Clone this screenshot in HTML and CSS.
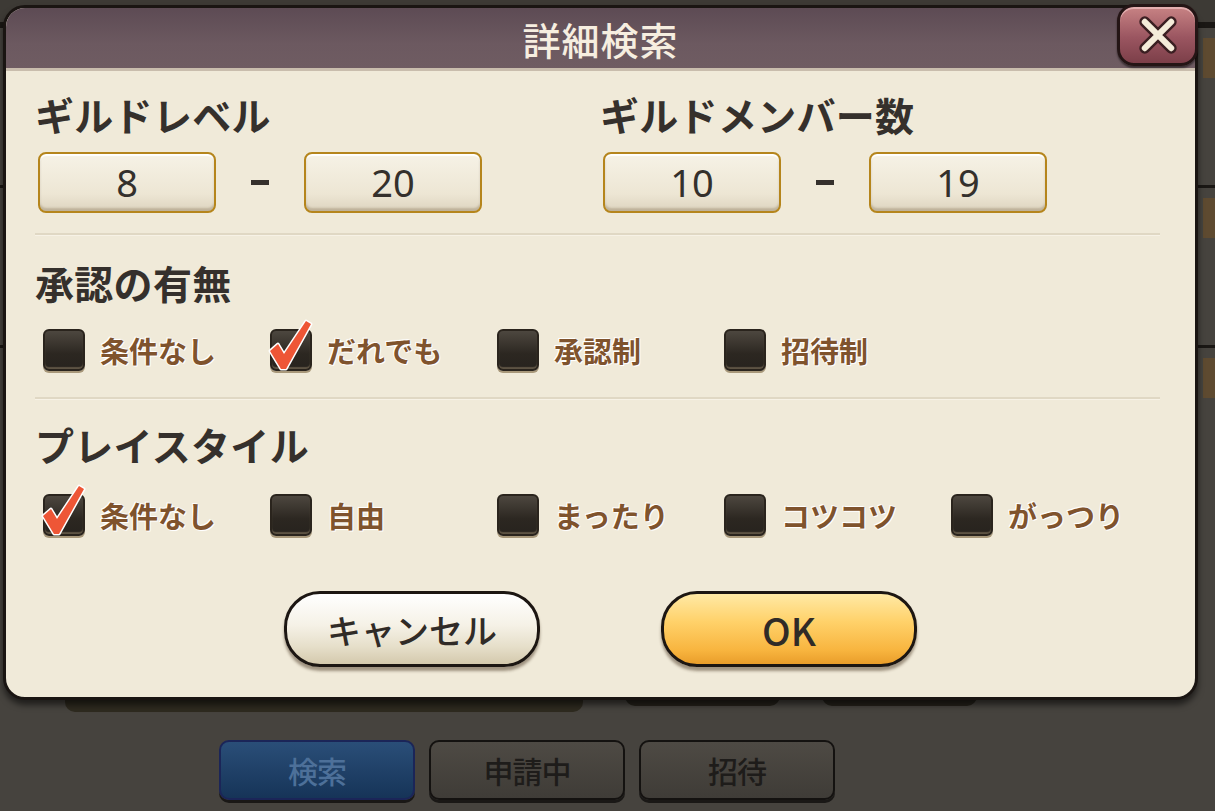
FILE: index.html
```html
<!DOCTYPE html>
<html lang="ja">
<head>
<meta charset="utf-8">
<title>詳細検索</title>
<link rel="stylesheet" href="styles.css">
</head>
<body>
<div class="screen">
  <div class="bg">
    <div class="bg-list">
      <div class="bg-row"></div>
      <div class="bg-row"></div>
      <div class="bg-row"></div>
      <div class="bg-row"></div>
    </div>
    <div class="bg-actions">
      <div class="bg-act wide"></div>
      <div class="bg-act"></div>
      <div class="bg-act"></div>
    </div>
    <nav class="tabs">
      <div class="tab active">検索</div>
      <div class="tab">申請中</div>
      <div class="tab">招待</div>
    </nav>
  </div>

  <div class="modal">
    <header class="modal-head">
      <h1 class="modal-title">詳細検索</h1>
      <button class="close-btn" aria-label="閉じる">
        <svg viewBox="0 0 40 40" width="44" height="44">
          <g stroke-linecap="round">
            <path d="M8 8 L32 32 M32 8 L8 32" stroke="#3b1f22" stroke-width="10"/>
            <path d="M8 8 L32 32 M32 8 L8 32" stroke="#f4ecd9" stroke-width="5.5"/>
          </g>
        </svg>
      </button>
    </header>

    <div class="modal-body">
      <div class="range-grid">
        <section class="range">
          <h2 class="sec-title">ギルドレベル</h2>
          <div class="range-row">
            <div class="num-box">8</div>
            <span class="dash"></span>
            <div class="num-box">20</div>
          </div>
        </section>
        <section class="range">
          <h2 class="sec-title">ギルドメンバー数</h2>
          <div class="range-row">
            <div class="num-box">10</div>
            <span class="dash"></span>
            <div class="num-box">19</div>
          </div>
        </section>
      </div>

      <hr class="sep sep-1">

      <h2 class="sec-title t2">承認の有無</h2>
      <div class="checks">
        <label class="check"><span class="box"></span><span class="lbl">条件なし</span></label>
        <label class="check"><span class="box on"><svg class="tick" viewBox="0 0 50 58" width="50" height="58"><path d="M4 34 L12 27 L18 37 L40 4 L45 7 L20 52 L15 52 Z"/></svg></span><span class="lbl">だれでも</span></label>
        <label class="check"><span class="box"></span><span class="lbl">承認制</span></label>
        <label class="check"><span class="box"></span><span class="lbl">招待制</span></label>
      </div>

      <hr class="sep sep-2">

      <h2 class="sec-title t3">プレイスタイル</h2>
      <div class="checks c2">
        <label class="check"><span class="box on"><svg class="tick" viewBox="0 0 50 58" width="50" height="58"><path d="M4 34 L12 27 L18 37 L40 4 L45 7 L20 52 L15 52 Z"/></svg></span><span class="lbl">条件なし</span></label>
        <label class="check"><span class="box"></span><span class="lbl">自由</span></label>
        <label class="check"><span class="box"></span><span class="lbl">まったり</span></label>
        <label class="check"><span class="box"></span><span class="lbl">コツコツ</span></label>
        <label class="check"><span class="box"></span><span class="lbl">がっつり</span></label>
      </div>

      <div class="actions">
        <button class="btn cancel">キャンセル</button>
        <button class="btn ok">OK</button>
      </div>
    </div>
  </div>
</div>
</body>
</html>
```

FILE: styles.css
```css
* { box-sizing: border-box; margin: 0; padding: 0; }

html, body {
  width: 1215px;
  height: 811px;
  overflow: hidden;
  background: #46433e;
  font-family: "Noto Sans CJK JP", "Noto Sans", sans-serif;
}

.screen {
  position: relative;
  width: 1215px;
  height: 811px;
}

/* ---------- background page ---------- */
.bg {
  display: flex;
  flex-direction: column;
  height: 811px;
}

.bg-list {
  height: 640px;
  display: flex;
  flex-direction: column;
}

.bg-row {
  position: relative;
  height: 160px;
  border-top: 3px solid #1a1714;
}
.bg-row:first-child {
  height: 25px;
  border-top: none;
  border-bottom: 3px solid #1a1714;
  background: #3d3a35;
}
.bg-row::after {
  content: "";
  position: absolute;
  right: 0;
  top: 10px;
  width: 12px;
  height: 40px;
  background: #5e4a30;
}
.bg-row:first-child::after { display: none; }

.bg-actions {
  height: 72px;
  display: flex;
  align-items: flex-start;
}
.bg-act {
  height: 66px;
  width: 155px;
  background: #25221b;
  border-radius: 0 0 10px 10px;
  margin-left: 42px;
}
.bg-act.wide {
  width: 518px;
  height: 72px;
  margin-left: 65px;
  background: #2e2a1f;
}

.tabs {
  margin-top: 28px;
  display: flex;
  gap: 14px;
  padding-left: 219px;
}
.tab {
  width: 196px;
  height: 60px;
  border: 2px solid #141210;
  border-radius: 10px;
  background: linear-gradient(#4e4a44, #3f3c37);
  box-shadow: 0 3px 0 #1a1816;
  color: #1e1c1a;
  font-size: 30px;
  font-weight: 500;
  line-height: 56px;
  text-align: center;
  letter-spacing: -1px;
}
.tab.active {
  border-color: #1b2558;
  background: linear-gradient(#2a4e78, #163458);
  color: #4d7099;
}

/* ---------- modal ---------- */
.modal {
  position: absolute;
  left: 3px;
  top: 5px;
  width: 1195px;
  height: 695px;
  border: 3px solid #1a1512;
  border-radius: 22px;
  background: #f0ead9;
  box-shadow: 0 5px 6px rgba(0, 0, 0, 0.55);
  display: flex;
  flex-direction: column;
}

.modal-head {
  position: relative;
  height: 63px;
  border-radius: 19px 19px 0 0;
  background: linear-gradient(#5d4b54, #6c5960 60%, #6f5c62);
  border-bottom: 3px solid #c9bdad;
  display: flex;
  justify-content: center;
  align-items: center;
}

.modal-title {
  font-size: 38px;
  font-weight: 500;
  color: #f6eee0;
  letter-spacing: 1px;
  line-height: 1;
  margin-top: 2px;
}

.close-btn {
  position: absolute;
  right: -3px;
  top: -4px;
  width: 81px;
  height: 62px;
  border: 3px solid #241515;
  border-radius: 17px;
  background: linear-gradient(#c88384, #9a5560 55%, #7c3f49);
  box-shadow: inset 0 2px 0 rgba(255, 220, 220, 0.5), 0 2px 2px rgba(0, 0, 0, 0.5);
  display: flex;
  align-items: center;
  justify-content: center;
}

.modal-body {
  padding: 0 35px 0 29px;
  display: flex;
  flex-direction: column;
}

.range-grid {
  display: grid;
  grid-template-columns: 565px 1fr;
  margin-top: 21px;
}

.sec-title {
  font-size: 39px;
  font-weight: 700;
  color: #35302c;
  line-height: 44px;
  letter-spacing: 0.3px;
}

.range-row {
  display: flex;
  align-items: center;
  margin-top: 16px;
  padding-left: 3px;
}

.num-box {
  width: 178px;
  height: 61px;
  border: 2px solid #b5851c;
  border-radius: 8px;
  background: linear-gradient(#f6f2e6, #ede6d4 70%, #ddd4bf);
  box-shadow: inset 0 -3px 2px rgba(120, 100, 70, 0.3), inset 0 2px 1px #fff;
  font-family: "Noto Sans", sans-serif;
  font-size: 38px;
  font-weight: 400;
  color: #34302c;
  text-align: center;
  line-height: 56px;
}

.dash {
  width: 88px;
  display: flex;
  justify-content: center;
}
.dash::before {
  content: "";
  width: 18px;
  height: 5px;
  background: #35302c;
}

.sep {
  border: none;
  height: 3px;
  background: #e0d8c4;
  border-bottom: 1px solid #f7f2e6;
}
.sep-1 { margin-top: 20px; }
.sep-2 { margin-top: 26px; }

.t2 { margin-top: 24px; }
.t3 { margin-top: 22px; }

.checks {
  display: grid;
  grid-template-columns: repeat(5, 227px);
  padding-left: 8px;
  margin-top: 25px;
}
.checks.c2 { margin-top: 28px; }

.check {
  display: flex;
  align-items: center;
  gap: 15px;
  height: 42px;
}

.box {
  position: relative;
  width: 42px;
  height: 42px;
  border-radius: 6px;
  border: 2px solid #2a241d;
  background: linear-gradient(#4d473f, #2c2721 60%, #27231e);
  box-shadow: 0 2px 0 #a8987a, inset 0 -2px 1px #5d5343;
}

.tick {
  position: absolute;
  left: -6px;
  top: -14px;
  overflow: visible;
}
.tick path {
  fill: #ee5636;
  stroke: #ffffff;
  stroke-width: 3px;
  stroke-linejoin: round;
  paint-order: stroke;
}

.lbl {
  font-size: 29px;
  font-weight: 700;
  color: #7f532d;
  text-shadow: 0 0 2px #fff, 0 0 2px #fff, 1px 1px 0 #fff, -1px -1px 0 #fff;
  line-height: 1;
}

.actions {
  display: flex;
  justify-content: center;
  gap: 121px;
  margin-top: 55px;
  padding-left: 6px;
}

.btn {
  width: 256px;
  height: 76px;
  border: 3px solid #1c1612;
  border-radius: 36px;
  font-family: "Noto Sans CJK JP", "Noto Sans", sans-serif;
  font-weight: 500;
  color: #302b27;
  box-shadow: 0 4px 3px rgba(60, 40, 20, 0.45);
}
.btn.cancel {
  font-size: 34px;
  background: linear-gradient(#ffffff, #f5f1e6 45%, #e6dfca 75%, #d4c9ad);
}
.btn.ok {
  font-size: 38px;
  background: linear-gradient(#ffe9a5, #ffd169 40%, #f8b53f 80%, #e99d2a);
}
```
